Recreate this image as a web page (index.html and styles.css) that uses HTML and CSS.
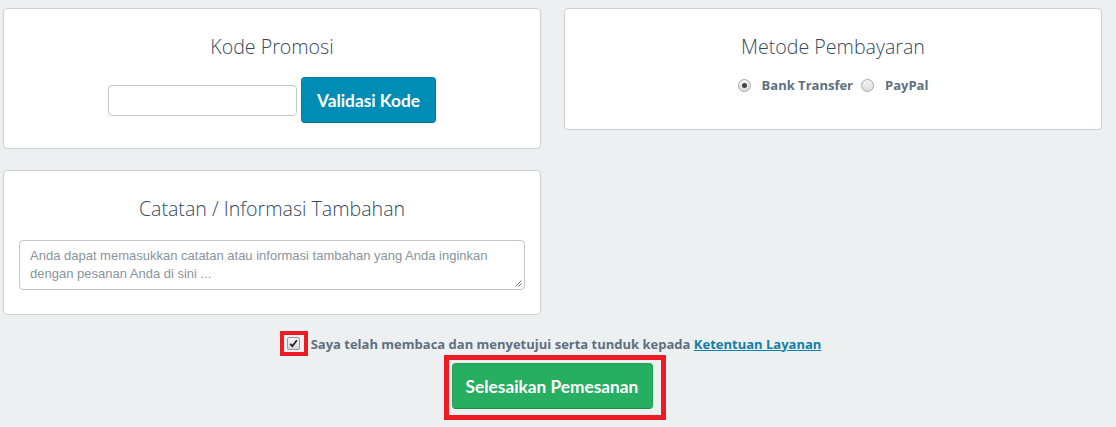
FILE: index.html
```html
<!DOCTYPE html>
<html>
<head>
<meta charset="utf-8">
<link rel="stylesheet" href="styles.css">
</head>
<body>
<div class="page">
  <div class="grid">
    <div class="col">
      <div class="card card-promo">
        <h3 class="title">Kode Promosi</h3>
        <div class="promo-row">
          <input class="promo-input" type="text">
          <button class="btn btn-info">Validasi Kode</button>
        </div>
      </div>
      <div class="card card-notes">
        <h3 class="title">Catatan / Informasi Tambahan</h3>
        <div class="notes-box">
          <span class="placeholder">Anda dapat memasukkan catatan atau informasi tambahan yang Anda inginkan dengan pesanan Anda di sini ...</span>
          <svg class="grip" width="7" height="7" viewBox="0 0 7 7"><path d="M6.5 0.5L0.5 6.5M6.5 3.5L3.5 6.5" stroke="#777" stroke-width="1"/></svg>
        </div>
      </div>
    </div>
    <div class="col">
      <div class="card card-pay">
        <h3 class="title">Metode Pembayaran</h3>
        <div class="radios">
          <span class="radio checked"></span><span class="radio-label">Bank Transfer</span>
          <span class="radio"></span><span class="radio-label">PayPal</span>
        </div>
      </div>
    </div>
  </div>
  <div class="agree">
    <span class="mark mark-check"><span class="checkbox"><svg width="9" height="9" viewBox="0 0 9 9"><path d="M1.2 4.8L3.4 7.2L7.8 1.2" fill="none" stroke="#222" stroke-width="1.8"/></svg></span></span>
    <span class="agree-text">Saya telah membaca dan menyetujui serta tunduk kepada <a class="tos" href="#">Ketentuan Layanan</a></span>
  </div>
  <div class="submit-row">
    <span class="mark mark-btn"><button class="btn btn-success">Selesaikan Pemesanan</button></span>
  </div>
</div>
</body>
</html>
```
FILE: styles.css
```css
html, body {
  margin: 0;
  padding: 0;
  background: #ecf0f1;
  font-family: "Open Sans", "DejaVu Sans", sans-serif;
}
.page {
  padding: 8px 0 0 3px;
  width: 1099px;
}
.grid {
  display: grid;
  grid-template-columns: 538px 538px;
  column-gap: 23px;
  align-items: start;
}
.col {
  display: flex;
  flex-direction: column;
  gap: 21px;
}
.card {
  background: #fff;
  border: 1px solid #cdd1d3;
  border-radius: 4px;
  box-sizing: border-box;
  text-align: center;
}
.card-promo { height: 141px; padding-top: 26px; }
.card-notes { height: 145px; padding-top: 26px; }
.card-pay { height: 122px; padding-top: 26px; }
.title {
  margin: 0;
  font-weight: 300;
  font-size: 19.6px;
  line-height: 24px;
  color: #34495e;
}
.promo-row {
  margin-top: 18px;
  display: flex;
  justify-content: center;
  align-items: center;
  gap: 4px;
}
.promo-input {
  width: 189px;
  height: 31px;
  box-sizing: border-box;
  border: 1px solid #bfc8d0;
  border-radius: 4px;
  background: #fff;
  margin: 0;
  padding: 0;
}
.btn {
  font-family: Lato, "Open Sans", sans-serif;
  font-weight: 700;
  font-size: 17.3px;
  color: #fff;
  border: 1px solid transparent;
  border-radius: 4px;
  height: 46px;
  box-sizing: border-box;
  margin: 0;
  padding: 0;
  cursor: pointer;
}
.btn-info {
  width: 135px;
  background: #008db5;
  border-color: #0a7ea2;
  border-bottom-color: #006b8c;
}
.btn-success {
  width: 201px;
  background: #27ae60;
  border-color: #21a056;
  border-bottom-color: #1b8a49;
  display: block;
}
.card-notes .notes-box {
  position: relative;
  margin: 19px 15px 0 15px;
  height: 50px;
  box-sizing: border-box;
  border: 1px solid #bfc8d0;
  border-radius: 4px;
  text-align: left;
  padding: 6px 10px;
  font-family: "Liberation Sans", Arial, sans-serif;
  font-size: 13px;
  line-height: 18px;
  color: #8a949c;
}
.grip {
  position: absolute;
  right: 2px;
  bottom: 2px;
}
.radios {
  margin-top: 17px;
  display: flex;
  justify-content: center;
  align-items: center;
  font-size: 13px;
  font-weight: 700;
  color: #5e6f80;
  padding-left: 8px;
}
.radio {
  width: 11px;
  height: 11px;
  border-radius: 50%;
  border: 1px solid #a9a9a9;
  background: linear-gradient(#f3f3f3, #dcdcdc);
  display: inline-flex;
  align-items: center;
  justify-content: center;
  margin-right: 11px;
}
.radio.checked::after {
  content: "";
  width: 5px;
  height: 5px;
  border-radius: 50%;
  background: #444;
}
.radio-label { margin-right: 8px; line-height: 18px; }
.agree {
  margin-top: 16px;
  display: flex;
  justify-content: center;
  align-items: center;
  font-size: 13px;
  font-weight: 700;
  color: #5e6f80;
  padding-right: 4px;
}
.mark {
  border: 4px solid #ed1c24;
  display: inline-flex;
}
.mark-check {
  width: 28px;
  height: 25px;
  box-sizing: border-box;
  align-items: center;
  justify-content: center;
  margin-right: 3px;
}
.checkbox {
  width: 11px;
  height: 11px;
  border: 1px solid #9a9a9a;
  border-radius: 2px;
  background: linear-gradient(#f4f4f4, #d6d6d6);
  display: flex;
  align-items: center;
  justify-content: center;
}
.tos {
  color: #137fa6;
  text-decoration: underline;
}
.submit-row {
  display: flex;
  justify-content: center;
  padding-left: 4px;
  margin-top: -1px;
}
.mark-btn {
  border-width: 5px;
  padding: 3px 8px 6px 3px;
}
```
